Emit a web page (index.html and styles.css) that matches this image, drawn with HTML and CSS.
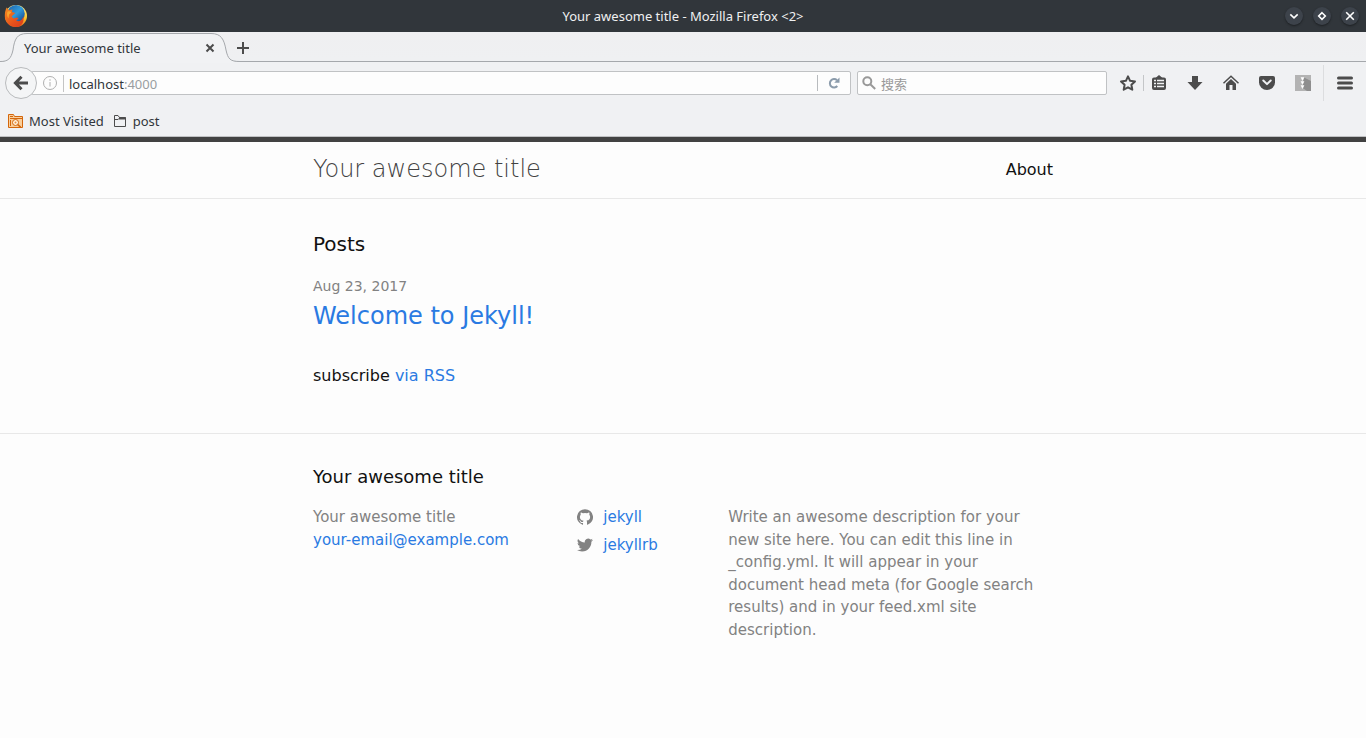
FILE: index.html
```html
<!DOCTYPE html>
<html lang="en">
<head>
<meta charset="utf-8">
<title>Your awesome title</title>
<link rel="stylesheet" href="styles.css">
</head>
<body>
<div class="titlebar">
  <svg class="firefox" viewBox="0 0 24 24" aria-hidden="true">
    <defs>
      <linearGradient id="globe" x1="0" y1="0" x2="1" y2="1"><stop offset="0" stop-color="#1d5fa8"/><stop offset=".5" stop-color="#2f9bdc"/><stop offset="1" stop-color="#123a80"/></linearGradient>
      <linearGradient id="fox" x1="0" y1="0" x2="1" y2="1"><stop offset="0" stop-color="#f58a1f"/><stop offset=".6" stop-color="#e8521c"/><stop offset="1" stop-color="#d93a1a"/></linearGradient>
      <linearGradient id="tail" x1="0" y1="0" x2="0" y2="1"><stop offset="0" stop-color="#fdf09a"/><stop offset=".6" stop-color="#fbc62b"/><stop offset="1" stop-color="#ec671d"/></linearGradient>
    </defs>
    <circle cx="12" cy="12" r="11" fill="url(#tail)"/>
    <circle cx="12" cy="9.800" r="8.800" fill="url(#globe)"/>
    <path d="M2.600 3.600 5 6.200 8.400 5.400 8 8 11.400 9 8.800 11.200 7.600 12.600 9.600 14.600 12.800 13.600 14.600 14.400 12.200 16.600C15.800 18.400 18.400 15.800 19.400 12.200 20.600 17.800 17.400 23.100 12 23.100 5.600 23.100.7 18 .8 12 .8 8.600 1.600 6 2.600 3.600Z" fill="url(#fox)"/>
    <path d="M3.400 7.800C5 7 6.600 7.200 7.200 8.400L5 10.600 4.400 14.500C3 12.500 2.700 10 3.400 7.800Z" fill="#f9a52d"/>
  </svg>
  <span class="window-title">Your awesome title - Mozilla Firefox &lt;2&gt;</span>
  <div class="window-buttons">
    <button class="round" aria-label="Minimize"><svg viewBox="0 0 16 16"><path d="m4.300 6.300 3.700 3.500 3.700-3.500"/></svg></button>
    <button class="round" aria-label="Maximize"><svg viewBox="0 0 16 16"><path d="m8 4.700 3.300 3.300L8 11.300 4.700 8Z"/></svg></button>
    <button class="round" aria-label="Close window"><svg viewBox="0 0 16 16"><path d="m4.200 4.200 7.600 7.600m0-7.600-7.600 7.600"/></svg></button>
  </div>
</div>

<div class="tabbar">
  <div class="tab">
    <svg class="tab-shape" viewBox="0 0 240 31" aria-hidden="true"><path class="tab-fill" d="M0 31V29.500C8 29.500 11 27 13 18 14.500 7 17 1.500 27 1.500H211C221 1.500 224 7 226 18 228 27 230 29.500 240 29.500V31Z"/><path class="tab-line" d="M0 29.500C8 29.500 11 27 13 18 14.500 7 17 1.500 27 1.500H211C221 1.500 224 7 226 18 228 27 230 29.500 240 29.500"/></svg>
    <span class="tab-label">Your awesome title</span>
    <button class="tab-close" aria-label="Close tab"><svg viewBox="0 0 10 10"><path d="m1.500 1.500 7 7m0-7-7 7"/></svg></button>
  </div>
  <button class="new-tab" aria-label="New tab"><svg viewBox="0 0 12 12"><path d="M6 0v12M0 6h12"/></svg></button>
</div>

<div class="navbar">
  <button class="back" aria-label="Back"><svg viewBox="0 0 16 16"><path d="M15 8H3M8.500 1.800 2.400 8l6.100 6.200"/></svg></button>
  <div class="address">
    <svg class="info" viewBox="0 0 16 16" aria-hidden="true"><circle cx="8" cy="8" r="6.500"/><path d="M8 7v4.500M8 4.200v1.600"/></svg>
    <span class="url" role="textbox" aria-label="Address" tabindex="0">localhost<span class="port">:4000</span></span>
    <button class="reload" aria-label="Reload"><svg viewBox="0 0 12 12"><path class="arc" d="M9 3.300A4.200 4.200 0 1 0 9.300 9"/><path class="head" d="M11.500.5v5.300H6.200Z"/></svg></button>
  </div>
  <label class="search">
    <svg viewBox="0 0 14 14" aria-hidden="true"><circle cx="5.300" cy="5.300" r="4"/><path d="m8.300 8.300 4.900 4.700"/></svg>
    <input type="text" placeholder="搜索" aria-label="搜索">
  </label>
  <div class="tools">
    <button class="tool" aria-label="Bookmark this page"><svg viewBox="0 0 18 18"><path d="m9 2.300 2.100 4.500 4.900.600-3.600 3.400.9 4.900L9 13.300l-4.300 2.400.9-4.900L2 7.400l4.900-.6Z" fill="none" stroke="#4c4c4c" stroke-width="2" stroke-linejoin="round"/></svg></button>
    <button class="tool split" aria-label="Bookmarks"><svg viewBox="0 0 18 18"><path d="M4 3.500h10a2 2 0 0 1 2 2V14a2 2 0 0 1-2 2H4a2 2 0 0 1-2-2V5.500a2 2 0 0 1 2-2Z" fill="#4c4c4c"/><path d="M5.500 4 9 1l3.500 3Z" fill="#4c4c4c"/><path d="M4 6.500h2M7 6.500h7M4 9.500h2M7 9.500h7M4 12.500h2M7 12.500h7" fill="none" stroke="#f0f1f3" stroke-width="1.500"/></svg></button>
    <button class="tool" aria-label="Downloads"><svg viewBox="0 0 18 18"><path d="M6 2h6v6h4.500L9 16 1.500 8H6Z" fill="#4c4c4c"/></svg></button>
    <button class="tool" aria-label="Home"><svg viewBox="0 0 18 18"><path d="m1.500 9.300 7.500-7 7.500 7" fill="none" stroke="#4c4c4c" stroke-width="1.500"/><path d="m9 5 5 4.800V16h-3.500v-5h-3v5H4V9.800Z" fill="#4c4c4c"/></svg></button>
    <button class="tool" aria-label="Pocket"><svg viewBox="0 0 18 18"><path d="M3 2h12a2 2 0 0 1 2 2v4.500a8 7.500 0 0 1-16 0V4a2 2 0 0 1 2-2Z" fill="#4c4c4c"/><path d="m5.300 6.500 3.700 3.600 3.700-3.600" fill="none" stroke="#f0f1f3" stroke-width="2" stroke-linecap="round" stroke-linejoin="round"/></svg></button>
    <button class="tool" aria-label="Archive extension"><svg viewBox="0 0 18 18"><path d="M1 1h16v16H1Z" fill="#b3b3b3"/><path d="M10 3.500 17 7v10h-4l-5-3.500Z" fill="#8e8e8e"/><path d="M7 3.500h3L8.500 6.500ZM7 7.500h3L8.500 10.500ZM7 11.500h3L8.500 14.500Z" fill="#fff" stroke="#fff" stroke-width=".5"/></svg></button>
  </div>
  <button class="menu" aria-label="Menu"><svg viewBox="0 0 16 14"><path d="M1.500 2h13M1.500 7h13M1.500 12h13"/></svg></button>
</div>

<div class="bookmarks">
  <a href="#" class="bookmark"><svg viewBox="0 0 16 16" aria-hidden="true"><path d="M.5 14.500v-13h5l1 2h8v11Z" fill="#f9cf9c" stroke="#d4660b"/><path d="M2 3.500h3M2 5.500h12M2.500 7v6" fill="none" stroke="#d4660b"/><circle cx="7.500" cy="9.500" r="3" fill="#fff0dc" stroke="#d4660b"/><circle cx="7.500" cy="9.500" r="1" fill="#e8913d"/><path d="m9.700 11.700 3 2.500" stroke="#d4660b" stroke-width="1.500"/></svg>Most Visited</a>
  <a href="#" class="bookmark"><svg viewBox="0 0 16 16" aria-hidden="true"><path d="M2.500 13.500v-11H6L7.500 4.500h6v9Z" fill="none" stroke="#4c4c4c"/><path d="M7.500 4h6v2.500H6Z" fill="#4c4c4c"/><path d="M2.500 6.500H6" stroke="#4c4c4c"/></svg>post</a>
</div>

<div class="page">
  <header class="site-header">
    <div class="wrapper header-row">
      <a class="site-title" href="#">Your awesome title</a>
      <nav><a class="page-link" href="#">About</a></nav>
    </div>
  </header>
  <main class="wrapper content">
    <h1 class="posts-heading">Posts</h1>
    <ul class="post-list">
      <li><span class="post-date">Aug 23, 2017</span><h2 class="post-title"><a href="#">Welcome to Jekyll!</a></h2></li>
    </ul>
    <p class="subscribe">subscribe <a href="#">via RSS</a></p>
  </main>
  <footer class="site-footer">
    <div class="wrapper">
      <h2 class="footer-heading">Your awesome title</h2>
      <div class="footer-columns">
        <ul class="contact"><li>Your awesome title</li><li><a href="#">your-email@example.com</a></li></ul>
        <ul class="social">
          <li><a href="#"><svg viewBox="0 0 16 16" aria-hidden="true"><path d="M8 .2a8 8 0 0 0-2.530 15.590c.4.070.550-.170.550-.380v-1.490c-2.230.480-2.690-.950-2.690-.950-.360-.920-.890-1.170-.890-1.170-.730-.5.050-.490.050-.490.800.060 1.230.830 1.230.830.710 1.220 1.870.870 2.330.660.070-.520.280-.870.510-1.070-1.780-.2-3.640-.890-3.640-3.950 0-.870.310-1.590.820-2.150-.080-.2-.360-1.020.080-2.120 0 0 .670-.210 2.200.820a7.700 7.700 0 0 1 4 0c1.530-1.040 2.200-.820 2.200-.820.440 1.100.160 1.920.080 2.120.510.560.820 1.270.820 2.150 0 3.070-1.870 3.750-3.650 3.950.290.250.540.730.540 1.480v2.200c0 .210.150.460.550.380A8 8 0 0 0 8 .2Z"/></svg>jekyll</a></li>
          <li><a href="#"><svg viewBox="0 0 16 16" aria-hidden="true"><path d="M15.970 3.060a6.600 6.600 0 0 1-1.890.520 3.300 3.300 0 0 0 1.440-1.820 6.600 6.600 0 0 1-2.080.8 3.280 3.280 0 0 0-5.590 2.990A9.300 9.300 0 0 1 1.090 2.120a3.280 3.280 0 0 0 1.020 4.380 3.300 3.300 0 0 1-1.490-.410v.040a3.280 3.280 0 0 0 2.630 3.220 3.300 3.300 0 0 1-1.480.060 3.280 3.280 0 0 0 3.070 2.280A6.600 6.600 0 0 1 0 13.040a9.300 9.300 0 0 0 5.030 1.480c6.040 0 9.340-5 9.340-9.340l-.010-.430a6.700 6.700 0 0 0 1.610-1.690Z"/></svg>jekyllrb</a></li>
        </ul>
        <p class="description">Write an awesome description for your new site here. You can edit this line in _config.yml. It will appear in your document head meta (for Google search results) and in your feed.xml site description.</p>
      </div>
    </div>
  </footer>
</div>
</body>
</html>
```
FILE: styles.css
```css
* { box-sizing: border-box; }
body {
  margin: 0;
  min-height: 100vh;
  display: flex;
  flex-direction: column;
  background: #fdfdfd;
  color: #31363b;
  font: 13px/20px "Noto Sans", "Noto Sans CJK SC", sans-serif;
}
button { border: 0; padding: 0; background: none; display: flex; align-items: center; justify-content: center; }
svg { display: block; flex: none; }
a { text-decoration: none; }
ul { list-style: none; margin: 0; padding: 0; }
h1, h2, p { margin: 0; font-weight: 400; }

/* Window frame */
.titlebar {
  display: grid;
  grid-template-columns: 1fr auto 1fr;
  align-items: center;
  height: 32px;
  padding: 0 7px;
  background: #31363b;
  color: #eff0f1;
}
.firefox { width: 24px; height: 24px; margin-left: -3px; }
.window-buttons { display: flex; gap: 10px; justify-content: flex-end; }
.round { width: 18px; height: 18px; border-radius: 50%; background: #3d434b; box-shadow: 0 1px 2px #1d2023; }
.round svg { width: 16px; height: 16px; fill: none; stroke: #fff; stroke-width: 1.6; }

/* Tabs */
.tabbar {
  display: flex;
  height: 30px;
  background: linear-gradient(#efeff1, #eff0f2 28px);
  border-bottom: 1px solid #a5a8ac;
}
.tab { position: relative; display: flex; align-items: center; width: 234px; padding: 2px 19px 0 24px; }
.tab-shape { position: absolute; left: 0; top: 0; width: 240px; height: 31px; }
.tab-fill { fill: #f1f2f4; }
.tab-line { fill: none; stroke: #a5a8ac; }
.tab-label { position: relative; flex: 1; }
.tab-close { position: relative; width: 10px; height: 20px; }
.tab-close svg { width: 10px; height: 10px; stroke: #4c4c4c; stroke-width: 2; }
.new-tab { position: relative; width: 18px; padding-top: 3px; }
.new-tab svg { width: 12px; height: 12px; stroke: #4c4c4c; stroke-width: 2; }

/* Toolbar */
.navbar { display: flex; align-items: center; height: 42px; padding-left: 5px; background: #f0f1f3; }
.back { z-index: 1; width: 32px; height: 32px; border: 1px solid #b9bbbd; border-radius: 50%; background: #f4f5f6; }
.back svg { width: 16px; height: 16px; fill: none; stroke: #4c4c4c; stroke-width: 3; }
.address {
  display: flex;
  align-items: center;
  flex: 1;
  height: 24px;
  margin: 0 6px 0 -6px;
  padding-left: 10px;
  border: 1px solid #c0c2c4;
  border-radius: 2px;
  background: #fdfdfd;
}
.info { width: 16px; height: 16px; fill: none; stroke: #b0b0b0; }
.url { flex: 1; margin-left: 5px; padding-left: 5px; border-left: 1px solid #c4c4c4; line-height: 16px; padding-top: 1px; }
.port { color: #999da1; }
.reload { width: 33px; height: 16px; border-left: 1px solid #b8bbbe; }
.reload svg { width: 12px; height: 12px; }
.reload .arc { fill: none; stroke: #8b9bab; stroke-width: 2; }
.reload .head { fill: #8b9bab; }
.search {
  display: flex;
  align-items: center;
  width: 250px;
  height: 24px;
  padding-left: 4px;
  border: 1px solid #c0c2c4;
  border-radius: 2px;
  background: #fdfdfd;
}
.search svg { width: 14px; height: 14px; fill: none; stroke: #999; stroke-width: 2; }
.search input { flex: 1; min-width: 0; padding: 1px 5px 0; border: 0; outline: 0; background: none; font: inherit; }
.search input::placeholder { color: #999; opacity: 1; }
.tools { display: flex; align-items: center; padding-left: 8px; }
.tool { width: 36px; height: 32px; }
.tool:first-child { width: 26px; }
.tool svg { width: 18px; height: 18px; }
.split { position: relative; }
.split::before { content: ""; position: absolute; left: 2px; top: 8px; height: 16px; border-left: 1px solid #c4c6c8; }
.menu { width: 43px; height: 36px; margin-left: 2px; border-left: 1px solid #dcdddf; }
.menu svg { width: 16px; height: 14px; stroke: #4c4c4c; stroke-width: 3; stroke-linecap: round; }
.bookmarks { display: flex; gap: 8px; height: 33px; padding: 1px 8px 0; background: #f0f1f3; border-bottom: 1px solid #c0c1c3; }
.bookmark { display: flex; align-items: center; gap: 5px; color: #31363b; }
.bookmark svg { width: 16px; height: 16px; }

/* Blog */
.page { flex: 1; border-top: 5px solid #424242; color: #111; font: 16px/24px "DejaVu Sans", sans-serif; }
.page a { color: #2a7ae2; }
.wrapper { max-width: 800px; margin: 0 auto; padding: 0 30px; }
.header-row { display: flex; justify-content: space-between; align-items: center; height: 56px; }
.site-header { border-bottom: 1px solid #e8e8e8; }
.page .site-title { color: #424242; font-size: 24px; font-weight: 200; line-height: 54px; padding-bottom: 2px; }
.page .page-link { color: #111; }
.content { padding: 30px; }
.posts-heading { font-size: 20px; line-height: 30px; margin-bottom: 15px; }
.post-list { margin-bottom: 30px; }
.post-date { font-size: 14px; color: #828282; }
.post-title { font-size: 24px; line-height: 36px; }
.subscribe { margin-bottom: 15px; }
.site-footer { padding: 30px 0; border-top: 1px solid #e8e8e8; }
.footer-heading { font-size: 18px; line-height: 26px; margin-bottom: 16px; }
.footer-columns { display: grid; grid-template-columns: 35fr 20fr 45fr; margin-right: -15px; font-size: 15px; line-height: 1.5; color: #828282; }
.footer-columns > * { padding-right: 15px; }
.social { display: grid; gap: 5px; align-content: start; }
.social a { display: flex; align-items: center; gap: 10px; }
.social svg { width: 16px; height: 16px; fill: #828282; }
```
